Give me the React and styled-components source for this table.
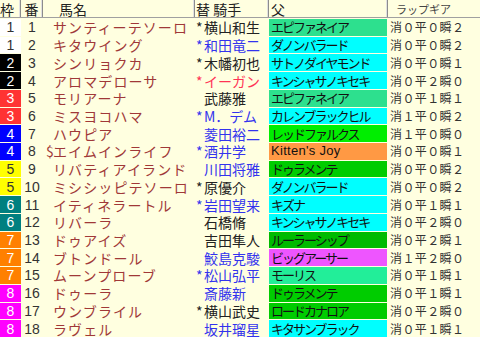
import React from "react";
import styled, { createGlobalStyle } from "styled-components";

const Global = createGlobalStyle`
  body {
    margin: 0;
    background: #ffffe0;
  }
`;

const FRAME = {
  1: { bg: "#ffffff", fg: "#333333" },
  2: { bg: "#000000", fg: "#ffffff" },
  3: { bg: "#ff3333", fg: "#ffffff" },
  4: { bg: "#0000ff", fg: "#ffffff" },
  5: { bg: "#ffff00", fg: "#333333" },
  6: { bg: "#008080", fg: "#ffffff" },
  7: { bg: "#ff8000", fg: "#ffffff" },
  8: { bg: "#ff00ff", fg: "#ffffff" },
};

const SIRE = {
  epi: "#2de08e",
  cyan: "#00ffff",
  lime: "#00ee00",
  orange: "#ff9944",
  green: "#00cc00",
  dark: "#00bb00",
  violet: "#ee55ff",
  mint: "#22ee99",
};

const JOCKEY = {
  k: "#222222",
  b: "#3333ee",
  r: "#ff3355",
};

const horses = [
  { f: 1, name: "サンティーテソーロ", mark: "*", jockey: "横山和生", jc: "k", sire: "エピファネイア", sc: "epi", lap: "消０平０瞬２" },
  { f: 1, name: "キタウイング", mark: "*", jockey: "和田竜二", jc: "b", sire: "ダノンバラード", sc: "cyan", lap: "消０平０瞬２" },
  { f: 2, name: "シンリョクカ", mark: "*", jockey: "木幡初也", jc: "k", sire: "サトノダイヤモンド", sc: "cyan", lap: "消０平０瞬１" },
  { f: 2, name: "アロマデローサ", mark: "*", jockey: "イーガン", jc: "r", sire: "キンシャサノキセキ", sc: "cyan", lap: "消０平２瞬０" },
  { f: 3, name: "モリアーナ", jockey: "武藤雅", jc: "k", sire: "エピファネイア", sc: "epi", lap: "消０平１瞬１" },
  { f: 3, name: "ミスヨコハマ", mark: "*", jockey: "M．デム", jc: "b", sire: "カレンブラックヒル", sc: "cyan", lap: "消１平０瞬２" },
  { f: 4, name: "ハウピア", jockey: "菱田裕二", jc: "b", sire: "レッドファルクス", sc: "lime", lap: "消１平０瞬０" },
  { f: 4, name: "エイムインライフ", pre: "$", mark: "*", jockey: "酒井学", jc: "b", sire: "Kitten's Joy", sc: "orange", lap: "消０平０瞬１" },
  { f: 5, name: "リバティアイランド", jockey: "川田将雅", jc: "b", sire: "ドゥラメンテ", sc: "green", lap: "消０平０瞬２" },
  { f: 5, name: "ミシシッピテソーロ", mark: "*", jockey: "原優介", jc: "k", sire: "ダノンバラード", sc: "cyan", lap: "消０平０瞬２" },
  { f: 6, name: "イティネラートル", mark: "*", jockey: "岩田望来", jc: "b", sire: "キズナ", sc: "cyan", lap: "消０平１瞬１" },
  { f: 6, name: "リバーラ", jockey: "石橋脩", jc: "k", sire: "キンシャサノキセキ", sc: "cyan", lap: "消０平２瞬０" },
  { f: 7, name: "ドゥアイズ", jockey: "吉田隼人", jc: "k", sire: "ルーラーシップ", sc: "dark", lap: "消０平２瞬１" },
  { f: 7, name: "ブトンドール", jockey: "鮫島克駿", jc: "b", sire: "ビッグアーサー", sc: "violet", lap: "消１平２瞬０" },
  { f: 7, name: "ムーンプローブ", mark: "*", jockey: "松山弘平", jc: "b", sire: "モーリス", sc: "mint", lap: "消０平１瞬１" },
  { f: 8, name: "ドゥーラ", jockey: "斎藤新", jc: "b", sire: "ドゥラメンテ", sc: "green", lap: "消０平１瞬１" },
  { f: 8, name: "ウンブライル", mark: "*", jockey: "横山武史", jc: "k", sire: "ロードカナロア", sc: "green", lap: "消０平２瞬０" },
  { f: 8, name: "ラヴェル", jockey: "坂井瑠星", jc: "b", sire: "キタサンブラック", sc: "cyan", lap: "消０平１瞬１" },
];

const COLS = "21px 22px 152px 74px 119px 92px";

const Table = styled.div`
  width: 480px;
  height: 337px;
  display: flex;
  flex-direction: column;
  background: #ffffe0;
  overflow: hidden;
  font-family: "Noto Sans CJK JP", "Liberation Sans", sans-serif;
`;

const Header = styled.div`
  height: 17px;
  flex: none;
  display: grid;
  grid-template-columns: ${COLS};
  border-bottom: 1px solid #a0a0a0;
`;

const HeadCell = styled.div`
  display: flex;
  align-items: center;
  justify-content: ${(p) => p.$align || "flex-start"};
  padding-left: ${(p) => p.$pad || 0}px;
  font-size: ${(p) => p.$size || 14}px;
  color: ${(p) => p.$color || "#222"};
  line-height: 16px;
  border-right: 1px solid #8c8c8c;
  box-shadow: inset -1px 0 0 #e0e0e0;
  white-space: pre;
  &:last-child {
    border-right: none;
    box-shadow: none;
  }
`;

const Row = styled.div`
  flex: 1;
  display: grid;
  grid-template-columns: ${COLS};
  padding-top: 1px;
  min-height: 0;
`;

const Cell = styled.div`
  display: flex;
  align-items: center;
  white-space: nowrap;
  line-height: 16px;
  min-width: 0;
`;

const Frame = styled(Cell)`
  justify-content: center;
  background: ${(p) => FRAME[p.$f].bg};
  color: ${(p) => FRAME[p.$f].fg};
  font-family: "Liberation Sans", sans-serif;
  font-size: 14px;
`;

const Num = styled(Cell)`
  justify-content: center;
  color: #333;
  font-family: "Liberation Sans", sans-serif;
  font-size: 14px;
`;

const Name = styled(Cell)`
  padding-left: 10px;
  color: #a03838;
  font-size: 14px;
  letter-spacing: 1.1px;
`;

const Hang = styled.span`
  display: inline-block;
  width: ${(p) => p.$w}px;
  margin-left: -${(p) => p.$w}px;
  letter-spacing: 0;
`;

const Jockey = styled(Cell)`
  padding-left: 9px;
  color: ${(p) => JOCKEY[p.$c]};
  font-size: 14px;
`;

const Sire = styled(Cell)`
  margin-right: 1px;
  padding-left: 2px;
  background: ${(p) => SIRE[p.$c]};
  color: #111;
  font-size: 13px;
  letter-spacing: -2px;
`;

const Latin = styled.span`
  font-family: "Liberation Sans", sans-serif;
  font-size: 13px;
  letter-spacing: 0.3px;
`;

const Lap = styled(Cell)`
  padding-left: 2px;
  color: #333;
  font-size: 12px;
  letter-spacing: 0.4px;
`;

export default function App() {
  return (
    <>
      <Global />
      <Table>
        <Header>
          <HeadCell $pad={0}>枠</HeadCell>
          <HeadCell $align="center">番</HeadCell>
          <HeadCell $pad={16}>馬名</HeadCell>
          <HeadCell $pad={1}>替 騎手</HeadCell>
          <HeadCell $pad={2}>父</HeadCell>
          <HeadCell $pad={8} $size={11} $color="#444">
            ラップギア
          </HeadCell>
        </Header>
        {horses.map((h, i) => (
          <Row key={i}>
            <Frame $f={h.f}>{h.f}</Frame>
            <Num>{i + 1}</Num>
            <Name>
              {h.pre && <Hang $w={7}>{h.pre}</Hang>}
              {h.name}
            </Name>
            <Jockey $c={h.jc}>
              {h.mark && <Hang $w={8}>{h.mark}</Hang>}
              {h.jockey}
            </Jockey>
            <Sire $c={h.sc}>
              {/^[A-Za-z]/.test(h.sire) ? <Latin>{h.sire}</Latin> : h.sire}
            </Sire>
            <Lap>{h.lap}</Lap>
          </Row>
        ))}
      </Table>
    </>
  );
}
